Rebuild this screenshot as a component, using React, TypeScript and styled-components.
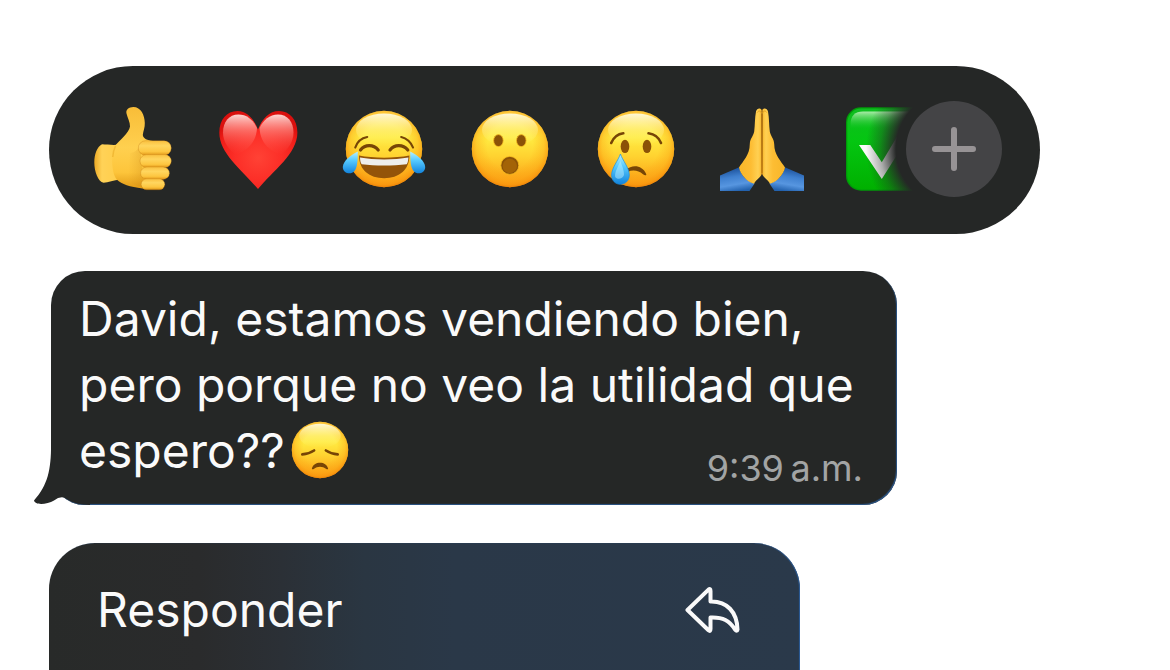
import React from "react";
import styled, { createGlobalStyle } from "styled-components";

const GlobalStyle = createGlobalStyle`
  *, *::before, *::after { box-sizing: border-box; }
  body { margin: 0; background: #ffffff; }
  button { border: 0; padding: 0; margin: 0; background: none; color: inherit; font: inherit; cursor: pointer; }
`;

const INK = "#252726";

const Screen = styled.main`
  display: flex;
  flex-direction: column;
  height: 100vh;
  min-height: 600px;
  overflow: hidden;
  padding: 66px 48px 0 49px;
  font-family: Inter, "Liberation Sans", sans-serif;
  color: #fafafa;
`;

const ReactionBar = styled.section`
  display: flex;
  flex: none;
  align-items: center;
  width: 100%;
  max-width: 991px;
  height: 168px;
  padding: 0 38px 2px 41px;
  border-radius: 84px;
  background: ${INK};
`;

const ReactionList = styled.ul`
  display: flex;
  gap: 42px;
  margin: 0;
  padding: 0;
  list-style: none;
`;

const ReactionButton = styled.button`
  display: block;
  width: 84px;
  height: 84px;
`;

const Glyph = styled.svg<{ $inline?: boolean }>`
  display: ${(p) => (p.$inline ? "inline-block" : "block")};
  width: ${(p) => (p.$inline ? "62px" : "100%")};
  height: ${(p) => (p.$inline ? "62px" : "100%")};
  margin: ${(p) => (p.$inline ? "-3px 0 -3px 4px" : "0")};
  vertical-align: ${(p) => (p.$inline ? "-10px" : "baseline")};
  overflow: visible;
`;

const MoreButton = styled.button`
  z-index: 1;
  display: grid;
  flex: none;
  place-items: center;
  width: 96px;
  height: 96px;
  margin-left: -24px;
  border-radius: 50%;
  background: #444446;
`;

const Bubble = styled.article`
  position: relative;
  display: flex;
  flex: none;
  flex-direction: column;
  width: 100%;
  max-width: 846px;
  margin: 37px 0 38px 2px;
  padding: 15px 34px 15px 28px;
  border-radius: 34px;
  background: ${INK};
  box-shadow: inset -1px -1px 1px #2b5689;
`;

const Tail = styled.svg`
  position: absolute;
  left: -17px;
  bottom: 0;
  width: 56px;
  height: 66px;
`;

const Message = styled.p`
  position: relative;
  margin: 0;
  font-size: 48px;
  line-height: 66px;
`;

const Time = styled.time`
  position: relative;
  align-self: flex-end;
  margin-top: -38px;
  font-size: 36px;
  line-height: 44px;
  color: #a2a4a4;
`;

const Menu = styled.nav`
  flex: 1 0 auto;
  width: 100%;
  max-width: 751px;
  border-radius: 46px 46px 0 0;
  background: linear-gradient(90deg, #282a29 0%, #2a2b2c 20%, #2b3036 31%, #2a3642 42%, #2a3848 54%, #2a394a 100%);
  box-shadow: inset -1px 0 1px #2b5c99;
`;

const MenuItem = styled.button`
  display: flex;
  align-items: center;
  justify-content: space-between;
  width: 100%;
  padding: 34px 59px 32px 48px;
  font-size: 48px;
  line-height: 66px;
  text-align: left;
`;

const BROWN = "#774506";

function FaceBase({ id }: { id: string }) {
  return (
    <>
      <defs>
        <linearGradient id={`${id}-skin`} x1="0" y1="0" x2="0" y2="1">
          <stop offset="0" stopColor="#ffdc50" />
          <stop offset="0.35" stopColor="#ffec42" />
          <stop offset="0.6" stopColor="#ffd230" />
          <stop offset="1" stopColor="#fb9812" />
        </linearGradient>
        <radialGradient id={`${id}-rim`} cx="0.5" cy="0.46" r="0.54">
          <stop offset="0.55" stopColor="#ffa512" stopOpacity="0" />
          <stop offset="0.82" stopColor="#fca212" stopOpacity="0.4" />
          <stop offset="0.94" stopColor="#f8960e" stopOpacity="0.75" />
          <stop offset="1" stopColor="#ea7f06" stopOpacity="0.95" />
        </radialGradient>
        <linearGradient id={`${id}-shine`} x1="0" y1="0" x2="0" y2="1">
          <stop offset="0" stopColor="#fffbe0" stopOpacity="0.95" />
          <stop offset="0.5" stopColor="#fff7a0" stopOpacity="0.4" />
          <stop offset="1" stopColor="#fff480" stopOpacity="0" />
        </linearGradient>
        <linearGradient id={`${id}-tear`} x1="0" y1="0" x2="0" y2="1">
          <stop offset="0" stopColor="#b8f0ff" />
          <stop offset="0.4" stopColor="#58cbff" />
          <stop offset="1" stopColor="#1283dc" />
        </linearGradient>
      </defs>
      <circle cx="42" cy="42" r="38.2" fill={`url(#${id}-skin)`} />
      <circle cx="42" cy="42" r="38.2" fill={`url(#${id}-rim)`} />
      <ellipse cx="42" cy="23" rx="28" ry="16.5" fill={`url(#${id}-shine)`} />
    </>
  );
}

function ThumbsUp() {
  const fingers = [
    [48.3, 33.7, 33, 14.6],
    [50, 47.6, 31.3, 13],
    [50.6, 60, 28.8, 12.4],
    [51.2, 71.8, 23.6, 11],
  ];
  return (
    <Glyph viewBox="0 0 84 84" aria-hidden="true">
      <defs>
        <linearGradient id="thumb-palm" x1="0" y1="0" x2="0" y2="1">
          <stop offset="0" stopColor="#f8bd38" />
          <stop offset="0.5" stopColor="#ffd04f" />
          <stop offset="0.8" stopColor="#fdc53b" />
          <stop offset="1" stopColor="#e29a16" />
        </linearGradient>
        <linearGradient id="thumb-cuff" x1="0" y1="0" x2="1" y2="0">
          <stop offset="0" stopColor="#ecaa26" />
          <stop offset="0.3" stopColor="#ffd257" />
          <stop offset="1" stopColor="#ffcd4a" />
        </linearGradient>
        <linearGradient id="thumb-finger" x1="0" y1="0" x2="0" y2="1">
          <stop offset="0" stopColor="#fac03e" />
          <stop offset="0.35" stopColor="#ffd65f" />
          <stop offset="0.75" stopColor="#fdc640" />
          <stop offset="1" stopColor="#e09516" />
        </linearGradient>
        <linearGradient id="thumb-shade" x1="0" y1="0" x2="1" y2="0">
          <stop offset="0" stopColor="#d08a14" stopOpacity="0" />
          <stop offset="1" stopColor="#c07a0c" stopOpacity="0.7" />
        </linearGradient>
      </defs>
      <path d="M12 37.3C7 40 4.3 47 4.3 55.5S8 75 13.6 75.7C18 75.5 24 73.3 30 72.5L29 37.5C24 38.5 17 37.4 12 37.3Z" fill="url(#thumb-cuff)" />
      <path d="M43.3 0C39 .2 35.6 2.5 36.5 6.4C37.5 11 40.2 14.8 40 19.5C39 26 29.5 33.5 25.3 38.5C21.5 44 20.5 64 26.7 72.5C32 77.5 39.5 79.8 52.5 81.5L63 80V34C57.5 33.5 53 31.5 52.8 28C53.2 24 55 20.5 54.8 16C54.7 8 51 0 43.3 0Z" fill="url(#thumb-palm)" />
      <path d="M40 46C44 46 48 43 50 38L54 80C46 80 40 76 38 72Z" fill="url(#thumb-shade)" opacity=".4" />
      <path d="M25.5 39C24 42 23 46 22.700 50" fill="none" stroke="#d9940f" strokeWidth="1.5" opacity=".35" />
      {fingers.map(([x, y, w, h]) => (
        <rect key={y} x={x} y={y} width={w} height={h} rx={h / 2} fill="url(#thumb-finger)" stroke="#b86d09" strokeOpacity=".4" strokeWidth=".7" />
      ))}
    </Glyph>
  );
}

function Heart() {
  const outline = "M42 22.5C37.8 11.5 30.6 3.9 21.5 3.9C10.8 3.9 3.3 12.5 3.3 25.5C3.3 47 27 63.5 42 82.1C57 63.5 81.400 47 81.400 25.5C81.400 12.5 73.6 3.9 63 3.9C53.4 3.9 46.2 11.5 42 22.5Z";
  return (
    <Glyph viewBox="0 0 84 84" aria-hidden="true">
      <defs>
        <radialGradient id="heart-fill" cx="0.5" cy="0.6" r="0.6">
          <stop offset="0" stopColor="#ff4235" />
          <stop offset="0.5" stopColor="#fc2e27" />
          <stop offset="0.85" stopColor="#f01e19" />
          <stop offset="1" stopColor="#da100e" />
        </radialGradient>
        <linearGradient id="heart-shine" x1="0" y1="0" x2="0" y2="1">
          <stop offset="0" stopColor="#ffe1de" stopOpacity=".95" />
          <stop offset=".4" stopColor="#ff968e" stopOpacity=".6" />
          <stop offset="1" stopColor="#ff4a40" stopOpacity="0" />
        </linearGradient>
      </defs>
      <path d={outline} fill="url(#heart-fill)" />
      <path d="M41 21C37 13 31 7.5 22.5 7.5C13 7.5 7 15 7 25.5C7 35 13 43 20 48C29 44 40 38 41 21Z" fill="url(#heart-shine)" />
      <path d="M43.5 21C47.5 13 53.5 7.5 62 7.5C71.5 7.5 77.5 15 77.5 25.5C77.5 35 71.5 43 64.5 48C55.5 44 44.5 38 43.5 21Z" fill="url(#heart-shine)" />
    </Glyph>
  );
}

function Joy() {
  return (
    <Glyph viewBox="0 0 84 84" aria-hidden="true">
      <FaceBase id="joy" />
      <g fill="none" stroke={BROWN} strokeLinecap="round">
        <path d="M13.3 40.5C15 35.5 19.5 31 25.2 30" strokeWidth="2.2" />
        <path d="M59.2 30C64.5 31 69.3 35.5 71 40.5" strokeWidth="2.2" />
        <path d="M18.5 43C23 37.2 31.5 37.2 36.2 43" strokeWidth="3.2" />
        <path d="M48 43C52.5 37.2 61 37.2 65.8 43" strokeWidth="3.2" />
      </g>
      <path d="M17 48.6C31 51.3 53 51.3 67.4 48.6C67.4 63 57 71.3 42.2 71.3S17 63 17 48.6Z" fill="#935409" />
      <path d="M18 50.5C32 53 52 53 66.4 50.5C66.2 54 65.7 56 64.6 57.2C51 59 33 59 19.8 57.2C18.7 56 18.1 54 18 50.5Z" fill="#eeeeec" />
      <path d="M15.8 44.5C10 47 .8 54 .8 60C.8 64.2 4 66.3 7.5 66.3C15 66.3 15.8 56 15.8 44.5Z" fill="url(#joy-tear)" />
      <path d="M68.2 44.5C74 47 83.2 54 83.2 60C83.2 64.2 80 66.3 76.5 66.3C69 66.3 68.2 56 68.2 44.5Z" fill="url(#joy-tear)" />
    </Glyph>
  );
}

function Surprised() {
  return (
    <Glyph viewBox="0 0 84 84" aria-hidden="true">
      <FaceBase id="wow" />
      <g fill="#8b5207" stroke="#f6bb20" strokeWidth=".8">
        <ellipse cx="30.4" cy="33.6" rx="4.8" ry="6" />
        <ellipse cx="53.3" cy="33.6" rx="4.8" ry="6" />
        <circle cx="41.8" cy="58.4" r="9" />
      </g>
      <circle cx="41.8" cy="59" r="7.2" fill="#a36307" />
    </Glyph>
  );
}

function Crying() {
  return (
    <Glyph viewBox="0 0 84 84" aria-hidden="true">
      <FaceBase id="cry" />
      <g fill="none" stroke={BROWN} strokeWidth="2.6" strokeLinecap="round">
        <path d="M17.2 36C19.5 30.5 24 27 29.3 26.3" />
        <path d="M54.5 26.3C60 27 64.8 30.5 67 36" />
      </g>
      <ellipse cx="31" cy="39.4" rx="4.3" ry="6.7" fill="#8b5207" />
      <ellipse cx="53" cy="39.4" rx="4.3" ry="6.7" fill="#8b5207" />
      <path d="M32 63C38 57.5 48 57.7 52.3 67.2C52.3 69 50.5 68.5 49 67.2C44.5 63.5 39 62.5 33.5 65Z" fill={BROWN} />
      <path d="M26.4 47C24.5 53 17.6 61 17.6 68C17.6 73.5 21.4 77.3 26.4 77.3S35.3 73.5 35.3 68C35.3 61 28.4 53 26.4 47Z" fill="url(#cry-tear)" stroke="#1990e2" strokeWidth=".7" />
      <path d="M26.3 54C24 60 20.5 65 21.2 70C23 73 29 72 30 68C30.3 63.5 27.8 58 26.3 54Z" fill="#c9f4ff" opacity=".45" />
    </Glyph>
  );
}

function Praying() {
  const hand = "M41.8 3C40.6 .5 36.8 .8 36 4.5C34.7 11 35.1 18 34.2 24.5C33.5 29 30 31.5 29.8 37C29.8 48 23 54 19 60.5C20.5 67.5 27 75 34 76.7C36.5 72 42 69.5 42 66Z";
  const cuff = "M0 68.5L19.2 60.3C20.5 67.5 27 75 34.6 76.5L29.5 84H0Z";
  return (
    <Glyph viewBox="0 0 84 84" aria-hidden="true">
      <defs>
        <linearGradient id="pray-hand" gradientUnits="userSpaceOnUse" x1="22" y1="0" x2="42" y2="0">
          <stop offset="0" stopColor="#f9b82c" />
          <stop offset=".45" stopColor="#fdbd33" />
          <stop offset=".8" stopColor="#ffd052" />
          <stop offset=".92" stopColor="#fdc33c" />
          <stop offset="1" stopColor="#d08a14" />
        </linearGradient>
        <linearGradient id="pray-cuff" x1="0.3" y1="0" x2="0.55" y2="1">
          <stop offset="0" stopColor="#174a92" />
          <stop offset=".4" stopColor="#3f80cf" />
          <stop offset=".72" stopColor="#5796e0" />
          <stop offset="1" stopColor="#2362ae" />
        </linearGradient>
      </defs>
      {["", "translate(84 0) scale(-1 1)"].map((side) => (
        <g key={side} transform={side || undefined}>
          <path d={cuff} fill="url(#pray-cuff)" />
          <path d={hand} fill="url(#pray-hand)" />
          <path d="M37.3 5.5C38.5 3.2 40.8 3.8 41.3 6" fill="none" stroke="#e09b1c" strokeWidth=".9" />
        </g>
      ))}
      <path d="M42 7V66" stroke="#a86608" strokeWidth="1" />
    </Glyph>
  );
}

function CheckMark() {
  return (
    <Glyph viewBox="0 0 84 84" aria-hidden="true">
      <defs>
        <linearGradient id="check-fill" x1="0" y1="0" x2="0" y2="1">
          <stop offset="0" stopColor="#0fbd20" />
          <stop offset="0.4" stopColor="#04c611" />
          <stop offset="1" stopColor="#00b000" />
        </linearGradient>
        <linearGradient id="check-shine" x1="0" y1="0" x2="0" y2="1">
          <stop offset="0" stopColor="#a9eba8" />
          <stop offset="1" stopColor="#20cc30" stopOpacity="0" />
        </linearGradient>
        <radialGradient id="check-fade" gradientUnits="userSpaceOnUse" cx="108" cy="42" r="88">
          <stop offset=".66" stopColor={INK} />
          <stop offset=".72" stopColor={INK} stopOpacity=".78" />
          <stop offset=".84" stopColor={INK} stopOpacity=".36" />
          <stop offset="1" stopColor={INK} stopOpacity="0" />
        </radialGradient>
      </defs>
      <rect y=".3" width="84" height="83.4" rx="15" fill="#009b08" />
      <rect x="1.3" y="1.6" width="81.4" height="80.8" rx="14" fill="url(#check-fill)" />
      <path d="M4.5 22V17C4.5 9 9 4.5 17 4.5H80V22Z" fill="url(#check-shine)" />
      <path d="M13 38H24.3L35.8 55.3L58 18H70L35.8 72Z" fill="#fafafa" />
      <rect x="18" y="-1" width="67" height="86" fill="url(#check-fade)" />
    </Glyph>
  );
}

function Disappointed() {
  return (
    <Glyph $inline viewBox="0 0 84 84" role="img" aria-label="Cara decepcionada">
      <FaceBase id="sad" />
      <g fill="none" stroke={BROWN} strokeLinecap="round">
        <path d="M18 48C24 47.5 29.5 45.8 34 42.7" strokeWidth="3.6" />
        <path d="M50 42.7C54.5 45.8 60 47.5 66 48" strokeWidth="3.6" />
      </g>
      <path d="M31 67C33.5 56.5 50.5 56.5 53 67C53 68.5 51.5 68.5 50.5 67.7C45 63.5 39 63.5 33.5 67.7C32.5 68.5 31 68.5 31 67Z" fill={BROWN} />
    </Glyph>
  );
}

const reactions = [
  { name: "Me gusta", Icon: ThumbsUp },
  { name: "Me encanta", Icon: Heart },
  { name: "Me divierte", Icon: Joy },
  { name: "Me asombra", Icon: Surprised },
  { name: "Me entristece", Icon: Crying },
  { name: "Gracias", Icon: Praying },
  { name: "Hecho", Icon: CheckMark },
];

export default function App() {
  return (
    <Screen>
      <GlobalStyle />
      <ReactionBar aria-label="Reacciones">
        <ReactionList>
          {reactions.map(({ name, Icon }) => (
            <li key={name}>
              <ReactionButton type="button" aria-label={name}>
                <Icon />
              </ReactionButton>
            </li>
          ))}
        </ReactionList>
        <MoreButton type="button" aria-label="Más reacciones">
          <svg width="44" height="44" viewBox="0 0 44 44" aria-hidden="true">
            <path d="M3 22H41M22 3V41" stroke="#979395" strokeWidth="6" strokeLinecap="round" />
          </svg>
        </MoreButton>
      </ReactionBar>

      <Bubble>
        <Tail viewBox="0 0 56 66" aria-hidden="true">
          <path d="M17 0C17.500 28 15 45 0 61.500C1 66.500 13 65.500 20 61.500Q27.500 55.500 34 60.500Q42 65.500 56 66V0Z" fill={INK} />
        </Tail>
        <Message>
          David, estamos vendiendo bien, pero porque no veo la utilidad que espero??
          <Disappointed />
        </Message>
        <Time dateTime="09:39">9:39{"\u2009"}a.m.</Time>
      </Bubble>

      <Menu aria-label="Acciones del mensaje">
        <MenuItem type="button">
          Responder
          <svg width="56" height="48" viewBox="0 0 56 48" fill="none" aria-hidden="true">
            <path d="M2.500 24L23.500 3.600Q25.500 2 25.500 5V15.500C42 15 52 26 52.500 43.500Q52 46 50 43.500C44.500 34.500 38 31 25.500 31.500V43Q25.500 46 23.500 44.300Z" stroke="#fafafa" strokeWidth="4" strokeLinejoin="round" />
          </svg>
        </MenuItem>
      </Menu>
    </Screen>
  );
}
